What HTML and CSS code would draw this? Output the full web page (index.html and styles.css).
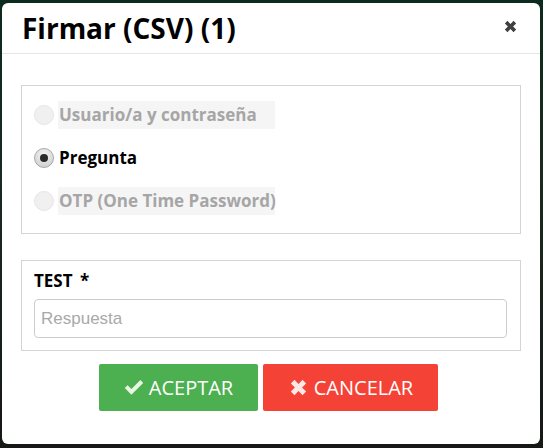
FILE: index.html
```html
<!DOCTYPE html>
<html lang="es">
<head>
    <meta charset="UTF-8">
    <title>Firmar (CSV)</title>
    <link rel="stylesheet" href="styles.css">
</head>
<body>
    <div class="backdrop">
        <div class="modal">
            <div class="modal-header">
                <h4 class="modal-title">Firmar (CSV) (1)</h4>
                <span class="close">
                    <svg width="13" height="13" viewBox="0 0 12 12"><path d="M0.8 3.2 3.2 0.8 6 3.6 8.8 0.8 11.2 3.2 8.4 6 11.2 8.8 8.8 11.2 6 8.4 3.2 11.2 0.8 8.8 3.6 6Z" fill="#404040"/></svg>
                </span>
            </div>
            <div class="modal-body">
                <div class="box options">
                    <label class="radio-row disabled">
                        <span class="radio"></span>
                        <span class="radio-label">Usuario/a y contraseña</span>
                    </label>
                    <label class="radio-row">
                        <span class="radio checked"></span>
                        <span class="radio-label">Pregunta</span>
                    </label>
                    <label class="radio-row disabled">
                        <span class="radio"></span>
                        <span class="radio-label">OTP (One Time Password)</span>
                    </label>
                </div>

                <div class="box question">
                    <div class="field-label">TEST <span class="req">*</span></div>
                    <input class="answer" type="text" placeholder="Respuesta">
                </div>

                <div class="actions">
                    <button class="btn btn-ok">
                        <svg width="20" height="17" viewBox="0 0 20 16"><path d="M0.8 8.6 3.6 5.8 7.4 9.6 16.4 0.6 19.2 3.4 7.4 15.2Z" fill="#e8f5e3"/></svg>
                        ACEPTAR
                    </button>
                    <button class="btn btn-cancel">
                        <svg width="17" height="17" viewBox="0 0 16 16"><path d="M0.8 4.2 4.2 0.8 8 4.6 11.8 0.8 15.2 4.2 11.4 8 15.2 11.8 11.8 15.2 8 11.4 4.2 15.2 0.8 11.8 4.6 8Z" fill="#fde6e4"/></svg>
                        CANCELAR
                    </button>
                </div>
            </div>
        </div>
    </div>
</body>
</html>
```

FILE: styles.css
```css
html, body {
    margin: 0;
    padding: 0;
    height: 100%;
}

body {
    background: linear-gradient(#0c2a1d 0%, #1a2a20 40%, #161816 100%);
    font-family: "Open Sans", sans-serif;
    overflow: hidden;
}

.backdrop {
    padding: 3px 3px 4px 2px;
}

.modal {
    width: 538px;
    height: 441px;
    background: #fff;
    border-radius: 6px;
    box-sizing: border-box;
}

.modal-header {
    height: 51px;
    box-sizing: border-box;
    border-bottom: 1px solid #e5e5e5;
    display: flex;
    align-items: center;
    justify-content: space-between;
    padding: 0 23px 0 20px;
}

.modal-title {
    margin: 0;
    font-size: 28px;
    font-weight: 700;
    color: #000;
}

.close {
    display: flex;
    margin-top: -4px;
}

.modal-body {
    padding: 31px 19px 0;
}

.box {
    border: 1px solid #d4d4d4;
}

.options {
    display: flex;
    flex-direction: column;
    gap: 15px;
    padding: 15px 12px 18px;
}

.radio-row {
    display: flex;
    align-items: center;
    height: 28px;
}

.radio {
    width: 18px;
    height: 18px;
    border-radius: 50%;
    border: 1px solid #c8c8c8;
    background: radial-gradient(circle at 50% 35%, #fff, #e6e6e6);
    display: flex;
    align-items: center;
    justify-content: center;
}

.radio.checked {
    border-color: #a9a9a9;
    background: radial-gradient(circle at 50% 30%, #f4f4f4, #c9c9c9);
}

.radio.checked::after {
    content: "";
    width: 8px;
    height: 8px;
    border-radius: 50%;
    background: #2b2b2b;
}

.radio-label {
    width: 217px;
    height: 28px;
    line-height: 28px;
    margin-left: 4px;
    padding-left: 1px;
    box-sizing: border-box;
    font-size: 17px;
    font-weight: 700;
    color: #000;
    white-space: nowrap;
}

.disabled .radio {
    border-color: #e6e6e6;
    background: #f0f0f0;
}

.disabled .radio-label {
    background: #f5f5f5;
    color: #a6a6a6;
}

.question {
    margin-top: 26px;
    padding: 8px 13px 12px 12px;
}

.field-label {
    font-size: 17px;
    font-weight: 700;
    color: #000;
    margin-bottom: 7px;
}

.req {
    margin-left: 3px;
}

.answer {
    display: block;
    width: 100%;
    height: 39px;
    box-sizing: border-box;
    border: 1px solid #ccc;
    border-radius: 4px;
    padding: 0 6px;
    font-family: "Liberation Sans", Arial, sans-serif;
    font-size: 17px;
    outline: none;
}

.answer::placeholder {
    color: #a9a9a9;
}

.actions {
    display: flex;
    justify-content: center;
    gap: 5px;
    margin-top: 13px;
    margin-left: -5px;
}

.btn {
    height: 47px;
    border: none;
    border-radius: 2px;
    font-family: "Open Sans", sans-serif;
    font-size: 20px;
    color: #fff;
    display: flex;
    align-items: center;
    gap: 5px;
    justify-content: center;
}

.btn-ok {
    width: 159px;
    background: #4caf50;
}

.btn-cancel {
    width: 175px;
    gap: 7px;
    padding-left: 8px;
    background: #f44336;
}
```
